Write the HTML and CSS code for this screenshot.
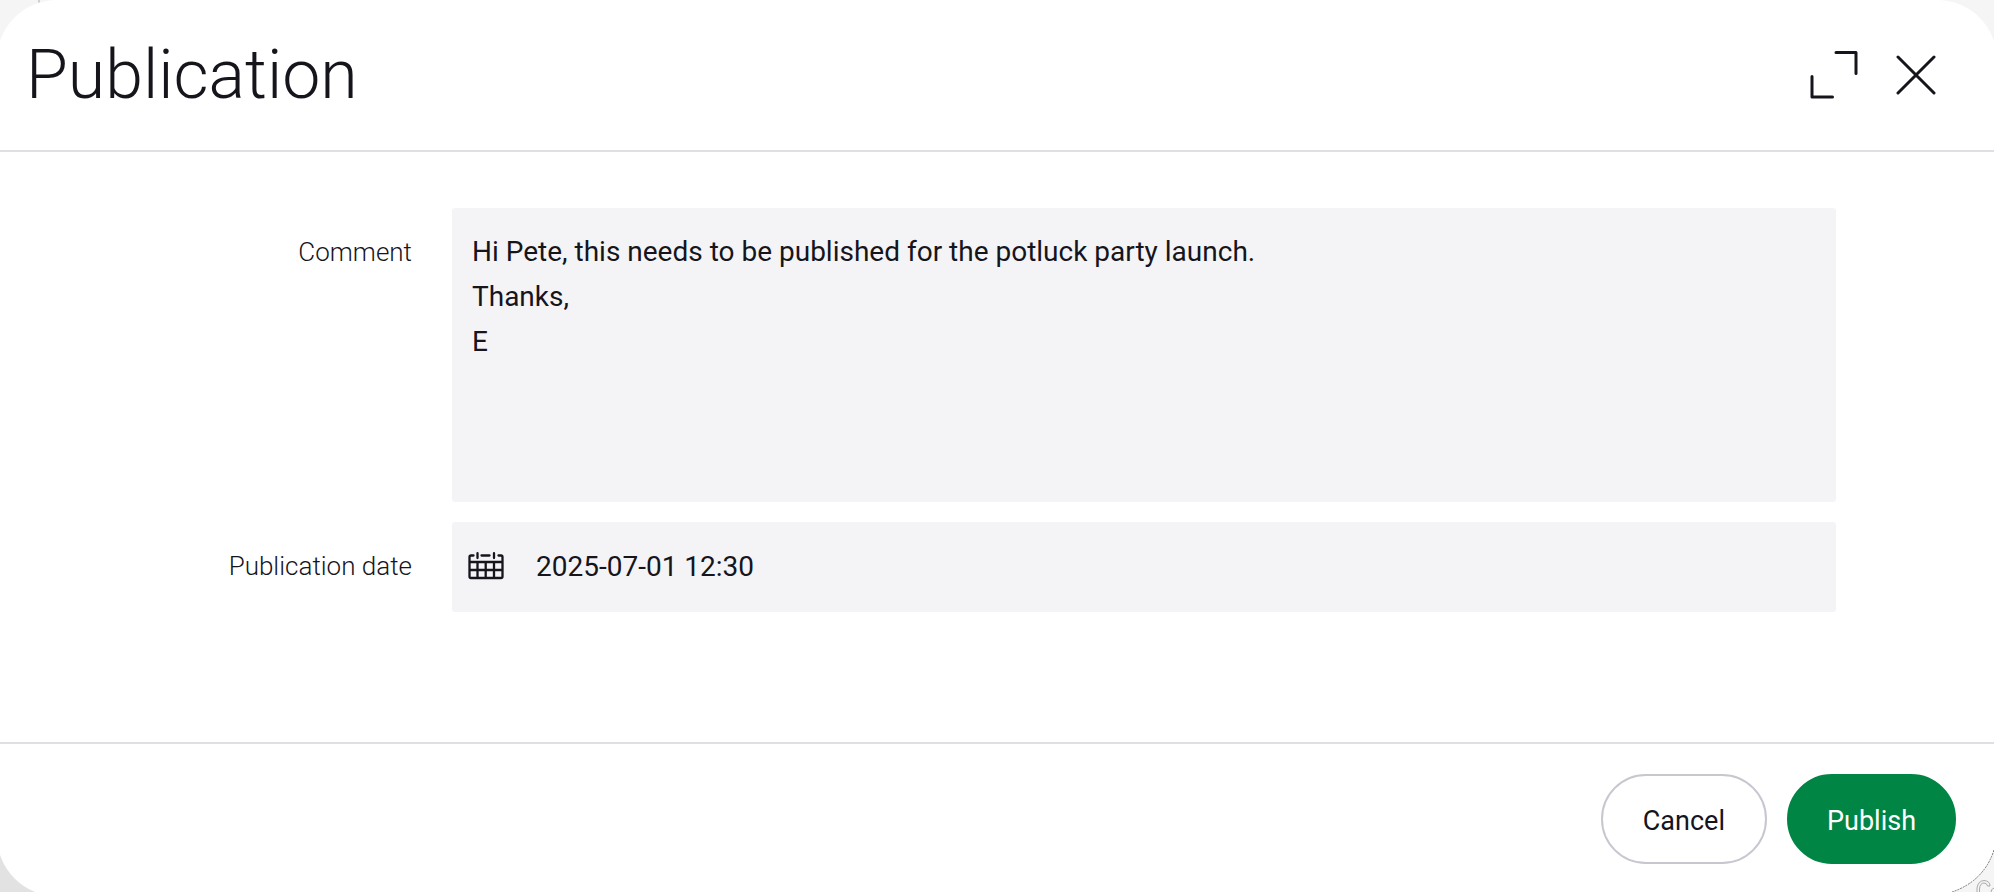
FILE: index.html
```html
<!DOCTYPE html>
<html lang="en">
<head>
<meta charset="utf-8">
<meta name="viewport" content="width=device-width, initial-scale=1">
<title>Publication</title>
<link rel="stylesheet" href="styles.css">
</head>
<body class="page">
<span class="page-rule"></span>
<svg class="page-corner" width="60" height="60" viewBox="0 0 60 60" fill="none" aria-hidden="true"><path fill="#f5f5f5" d="M60 18Q50 49 18 60H60z"/><path stroke="#777" stroke-dasharray="2 1" d="M60 18Q50 49 18 60"/><path stroke="#aaa" stroke-width="1" d="M43 60V56Q44 49 50 48.500Q56 49 56 54H53.500Q53 51 50 51Q46 51 45.500 57V60M57 60Q57 57 60 56"/></svg>
<form class="dialog" role="dialog" aria-labelledby="dialog-title">
  <header class="dialog-header">
    <h1 class="dialog-title" id="dialog-title">Publication</h1>
    <div class="dialog-tools">
      <button class="icon-button" type="button" aria-label="Expand">
        <svg width="48" height="48" viewBox="0 0 48 48" fill="none" stroke="currentColor" stroke-width="3" stroke-linecap="round" stroke-linejoin="round"><path d="M26 1.500H46V22.500M2 25.500V46H22.500"/></svg>
      </button>
      <button class="icon-button" type="button" aria-label="Close">
        <svg width="40" height="40" viewBox="0 0 40 40" fill="none" stroke="currentColor" stroke-width="3" stroke-linecap="round"><path d="M2 2L38 38M38 2L2 38"/></svg>
      </button>
    </div>
  </header>
  <main class="dialog-body">
    <label class="field-label" for="comment">Comment</label>
    <textarea class="field comment" id="comment">Hi Pete, this needs to be published for the potluck party launch.
Thanks,
E</textarea>
    <label class="field-label" for="date">Publication date</label>
    <div class="field date">
      <svg class="calendar" width="36" height="28" viewBox="0 0 36 28" fill="none" stroke="currentColor" stroke-width="2.300" stroke-linecap="round"><path d="M5.500 3.500H3Q1.500 3.500 1.500 5V24.500Q1.500 26 3 26H33Q34.500 26 34.500 24.500V5Q34.500 3.500 33 3.500H30.500M13.500 3.500H21.500M9.500 1.200V6M26 1.200V6M2 10H34M2 18H34M9.500 10V26M17.700 10V26M26 10V26"/></svg>
      <input class="date-input" id="date" type="text" value="2025-07-01 12:30">
    </div>
  </main>
  <footer class="dialog-footer">
    <button class="button" type="button">Cancel</button>
    <button class="button primary" type="submit">Publish</button>
  </footer>
</form>
</body>
</html>
```
FILE: styles.css
```css
* {
  box-sizing: border-box;
}

.page {
  position: relative;
  height: 100vh;
  margin: 0;
  overflow: hidden;
  background: linear-gradient(to right, transparent 50%, #f5f5f5 50%), linear-gradient(#f5f5f5 50%, #e2e2e2 50%);
  color: #16151c;
  font-family: Roboto, "Liberation Sans", sans-serif;
}

.page-rule {
  position: absolute;
  top: 0;
  left: 38px;
  width: 2px;
  height: 4px;
  background: #d0d0d4;
}

.page-corner {
  position: absolute;
  right: 0;
  bottom: 0;
  z-index: 1;
}

.dialog {
  position: relative;
  display: flex;
  flex-direction: column;
  height: calc(100vh + 4px);
  margin: 0 -3px;
  border-radius: 60px;
  background: #fff;
}

.dialog-header {
  display: flex;
  align-items: center;
  justify-content: space-between;
  padding: 36px 61px 36px 29px;
  border-bottom: 2px solid #e0dfe6;
}

.dialog-title {
  margin: 0;
  font-size: 68px;
  font-weight: 300;
  line-height: 78px;
}

.dialog-tools {
  display: flex;
  align-items: center;
  gap: 38px;
}

.icon-button {
  display: flex;
  padding: 0;
  border: 0;
  background: none;
  color: inherit;
}

.dialog-body {
  display: grid;
  flex: 1;
  grid-template-columns: 415px 1fr;
  align-content: start;
  gap: 20px 40px;
  padding: 56px 161px 20px 0;
}

.field-label {
  padding-top: 22px;
  font-size: 26px;
  font-weight: 300;
  line-height: 44px;
  text-align: right;
}

.field {
  width: 100%;
  border: 0;
  border-radius: 3px;
  background: #f4f4f7;
  color: inherit;
  font: 400 28px/45px Roboto, "Liberation Sans", sans-serif;
}

.comment {
  display: block;
  height: 294px;
  padding: 21px 20px;
  resize: none;
}

.date {
  display: flex;
  align-items: center;
  gap: 32px;
  height: 90px;
  padding: 0 20px 2px 16px;
}

.calendar {
  flex: none;
}

.date-input {
  flex: 1;
  padding: 0;
  border: 0;
  background: none;
  color: inherit;
  font: inherit;
}

.dialog-footer {
  display: flex;
  justify-content: flex-end;
  gap: 20px;
  padding: 30px 41px 32px;
  border-top: 2px solid #e0dfe6;
}

.button {
  height: 90px;
  padding: 4px 40px 0;
  border: 2px solid #c8c7d0;
  border-radius: 45px;
  background: #fff;
  color: inherit;
  font: 400 27px/32px Roboto, "Liberation Sans", sans-serif;
}

.primary {
  padding: 4px 38px 0;
  border-color: #008545;
  background: #008545;
  color: #fff;
}
```
